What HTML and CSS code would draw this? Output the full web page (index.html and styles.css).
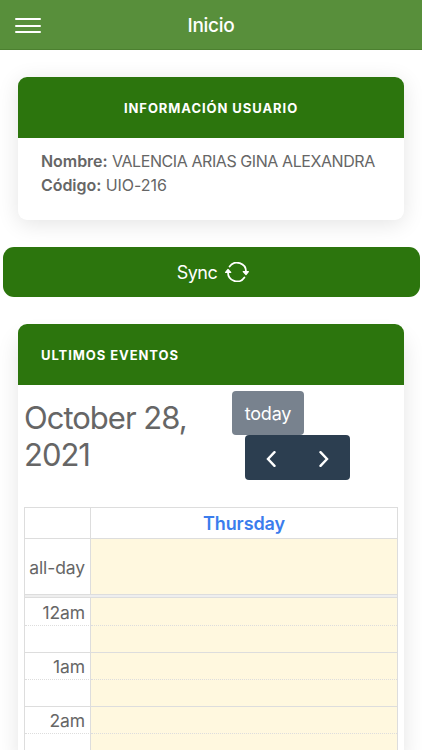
FILE: index.html
```html
<!DOCTYPE html>
<html lang="es">
  <head>
    <meta charset="utf-8">
    <meta name="viewport" content="width=device-width, initial-scale=1">
    <title>Inicio</title>
    <link rel="stylesheet" href="styles.css">
  </head>
  <body>
    <header class="navbar">
      <button class="menu" aria-label="Menu">
        <span></span>
        <span></span>
        <span></span>
      </button>
      <h1 class="titulo">Inicio</h1>
    </header>

    <section class="card card-usuario">
      <div class="card-header centrado"><span>INFORMACIÓN USUARIO</span></div>
      <div class="card-body">
        <p><b>Nombre:</b> <span class="nombre">VALENCIA ARIAS GINA ALEXANDRA</span></p>
        <p><b>Código:</b> UIO-216</p>
      </div>
    </section>

    <button class="btn-sync">
      <span>Sync</span>
      <svg width="24" height="20" viewBox="0 0 24 20" fill="none" stroke="#fff" stroke-width="1.8" stroke-linecap="round" stroke-linejoin="round">
        <path d="M4.6 4.6A9 9 0 0 1 21 10V11"/>
        <path d="M19.4 15.4A9 9 0 0 1 3 10V9"/>
        <path fill="#fff" stroke-width="1.2" d="M18.2 9.6L21 12.6L23.4 9.6Z"/>
        <path fill="#fff" stroke-width="1.2" d="M.6 10.4L3 7.4L5.8 10.4Z"/>
      </svg>
    </button>

    <section class="card card-eventos">
      <div class="card-header"><span>ULTIMOS EVENTOS</span></div>
      <div class="toolbar">
        <h2 class="fecha">October 28,<br>2021</h2>
        <div class="botones">
          <button class="btn-today" disabled>today</button>
          <div class="btn-group">
            <button aria-label="prev">
              <svg width="10" height="16" viewBox="0 0 10 16"><path d="M8.5 1.2L2 8L8.5 14.8"/></svg>
            </button>
            <button aria-label="next">
              <svg width="10" height="16" viewBox="0 0 10 16"><path d="M1.5 1.2L8 8L1.5 14.8"/></svg>
            </button>
          </div>
        </div>
      </div>

      <div class="calendario">
        <div class="fila cabecera"><div class="hora"></div><div class="dia"><span>Thursday</span></div></div>
        <div class="fila todo-dia"><div class="hora"><span>all-day</span></div><div class="celda"></div></div>
        <div class="divisor"></div>
        <div class="fila primera"><div class="hora"><span>12am</span></div><div class="celda"></div></div>
        <div class="fila media"><div class="hora"></div><div class="celda"></div></div>
        <div class="fila"><div class="hora"><span>1am</span></div><div class="celda"></div></div>
        <div class="fila media"><div class="hora"></div><div class="celda"></div></div>
        <div class="fila"><div class="hora"><span>2am</span></div><div class="celda"></div></div>
        <div class="fila media ultima"><div class="hora"></div><div class="celda"></div></div>
      </div>
    </section>
  </body>
</html>
```
FILE: styles.css
```css
* {
  box-sizing: border-box;
}

body {
  margin: 0;
  height: 750px;
  overflow: hidden;
  background: #fff;
  color: #666;
  font-family: Inter, "Liberation Sans", sans-serif;
  font-size: 16px;
}

h1, h2, p {
  margin: 0;
  font-weight: 400;
}

button {
  margin: 0;
  padding: 0;
  border: 0;
  font-family: inherit;
  color: #fff;
}

/* Barra superior */
.navbar {
  display: grid;
  grid-template-columns: 56px 1fr 56px;
  align-items: center;
  height: 50px;
  background: #588f3b;
  border-bottom: 1px solid #4c8030;
}

.menu {
  display: flex;
  flex-direction: column;
  gap: 4.5px;
  width: 26px;
  margin: 2px 0 0 15px;
  background: none;
}

.menu span {
  height: 2px;
  border-radius: 1px;
  background: #fff;
}

.titulo {
  padding-top: 1px;
  color: #fff;
  font-size: 19px;
  font-weight: 500;
  text-align: center;
  letter-spacing: -0.3px;
}

/* Tarjetas */
.card {
  margin: 0 18px;
  border-radius: 9px;
  background: #fff;
  box-shadow: 0 4px 22px rgba(0, 0, 0, 0.11);
}

.card-usuario {
  height: 143px;
  margin-top: 27px;
}

.card-header {
  display: flex;
  align-items: center;
  height: 61px;
  padding: 0 23px;
  border-radius: 9px 9px 0 0;
  background: #2c750d;
  color: #fff;
  font-size: 13px;
  font-weight: 700;
  letter-spacing: 0.93px;
}

.centrado {
  justify-content: center;
}

.card-body {
  padding: 11px 23px;
  line-height: 24px;
  white-space: nowrap;
  font-weight: 300;
  letter-spacing: -0.05px;
}

.card-body b {
  font-weight: 600;
}

.nombre {
  letter-spacing: -0.42px;
}

.btn-sync {
  display: flex;
  align-items: center;
  justify-content: center;
  gap: 8px;
  width: 417px;
  height: 50px;
  margin: 27px 0 27px 2.5px;
  padding-left: 4px;
  border-radius: 11px;
  background: #2c750d;
  font-size: 18px;
  font-weight: 400;
  letter-spacing: -0.5px;
}

/* Calendario */
.card-eventos {
  height: 426px;
  border-radius: 9px 9px 0 0;
  box-shadow: 0 14px 22px rgba(0, 0, 0, 0.11);
}

.toolbar {
  display: flex;
  height: 122px;
  padding: 6px 6px 0;
}

.fecha {
  width: 208px;
  margin-top: 8px;
  font-size: 31px;
  font-weight: 400;
  line-height: 37px;
  letter-spacing: -1px;
  white-space: nowrap;
}

.btn-today {
  display: block;
  width: 72px;
  height: 44px;
  border-radius: 4px;
  background: #78828e;
  font-size: 18px;
  letter-spacing: -0.2px;
}

.btn-group {
  display: flex;
  width: 105px;
  height: 45px;
  margin-left: 13px;
  border-radius: 4px;
  background: #2c3e50;
}

.btn-group button {
  display: flex;
  flex: 1;
  align-items: center;
  justify-content: center;
  padding-top: 2px;
  background: none;
}

.btn-group svg {
  fill: none;
  stroke: #fff;
  stroke-width: 2.4;
  stroke-linecap: round;
}

.calendario {
  margin: 0 6px;
  border: 1px solid #ddd;
  border-bottom: 0;
}

.fila {
  display: grid;
  grid-template-columns: 66px 1fr;
  height: 27px;
}

.fila > div {
  border-top: 1px solid #ddd;
}

.fila.media > div {
  border-top: 1px dotted #ddd;
}

.hora {
  display: flex;
  align-items: center;
  justify-content: flex-end;
  padding: 1px 5px 0 0;
  border-right: 1px solid #ddd;
  font-size: 17.5px;
  font-weight: 400;
  letter-spacing: -0.1px;
  white-space: nowrap;
}

.dia {
  display: flex;
  align-items: center;
  justify-content: center;
  color: #3b7ded;
  font-size: 18px;
  font-weight: 600;
  letter-spacing: -0.1px;
}

.celda {
  background: #fff8df;
}

.fila.cabecera {
  height: 30px;
}

.fila.cabecera > div,
.fila.primera > div {
  border-top: 0;
}

.fila.todo-dia {
  height: 56px;
}

.fila.ultima {
  height: 17px;
}

.divisor {
  height: 4px;
  border: 1px solid #ddd;
  border-width: 1px 0;
  background: #eee;
}
```
